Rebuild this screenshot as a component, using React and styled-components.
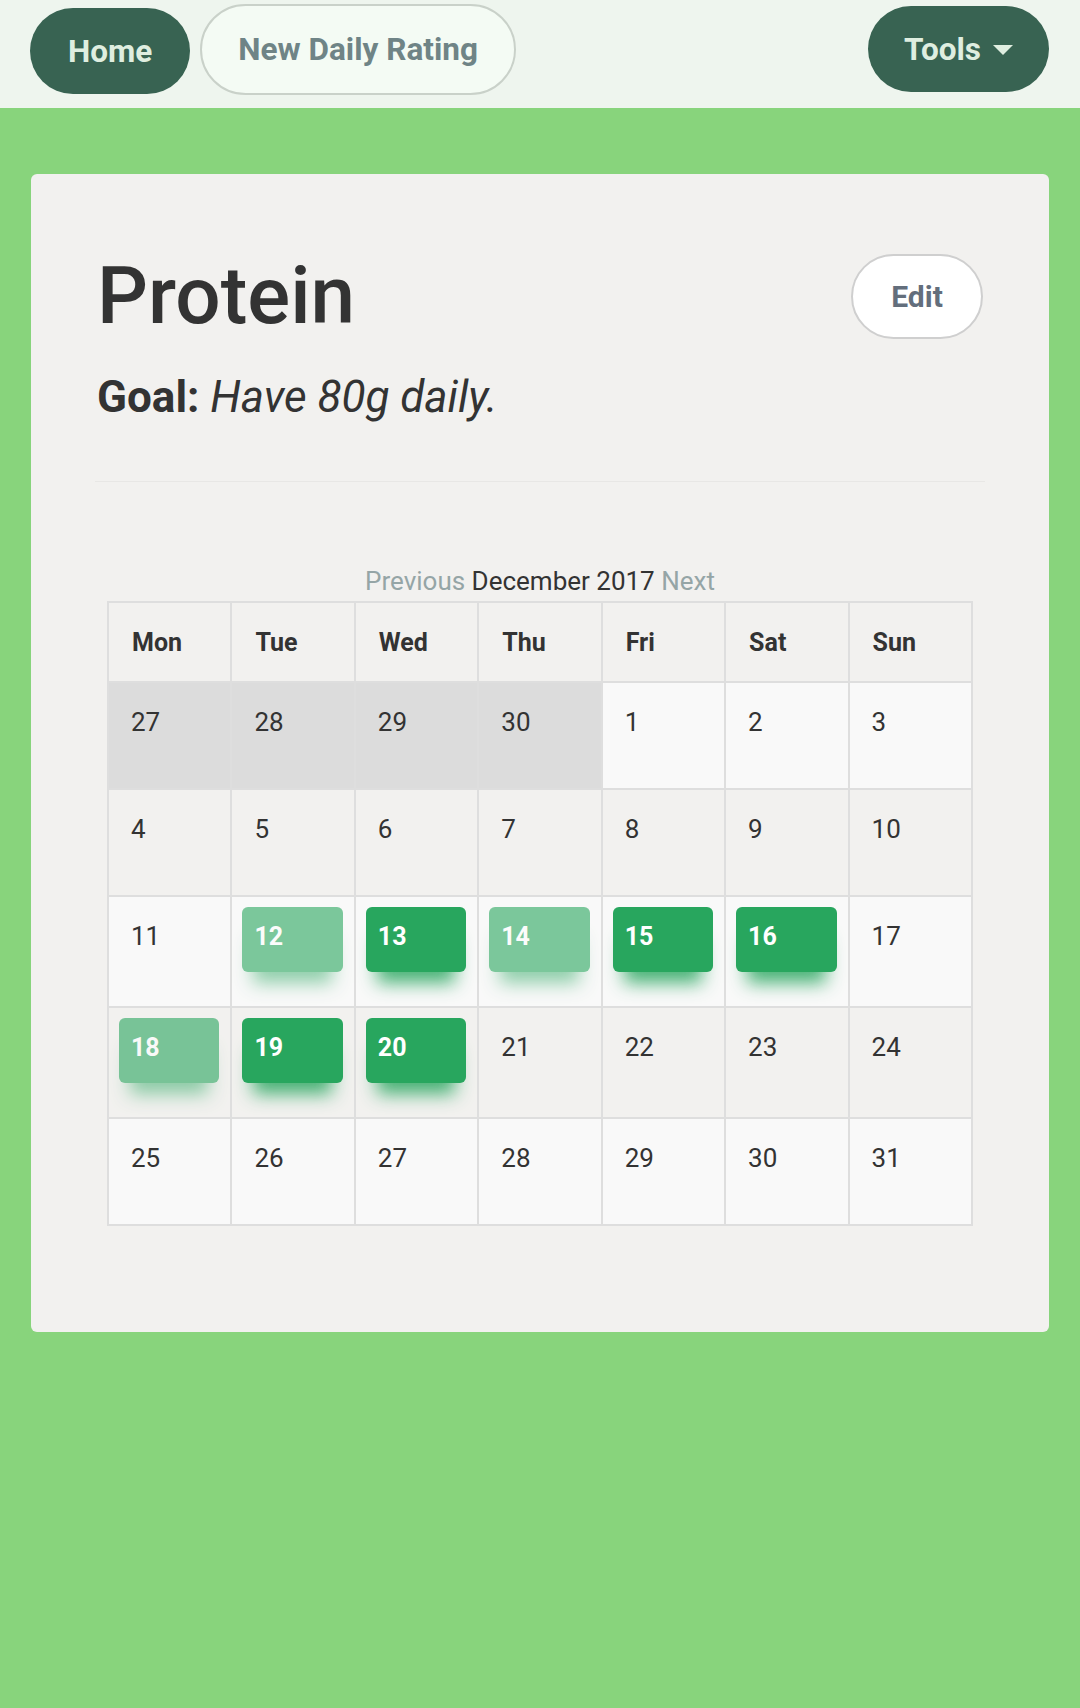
import React from "react";
import styled, { createGlobalStyle } from "styled-components";

const GlobalStyle = createGlobalStyle`
  html, body {
    margin: 0;
    padding: 0;
    background: #88d47c;
  }
  body {
    font-family: Roboto, "Liberation Sans", sans-serif;
    color: #333;
  }
  #root {
    min-height: 1708px;
  }
`;

const Navbar = styled.nav`
  display: flex;
  align-items: center;
  gap: 10px;
  height: 108px;
  box-sizing: border-box;
  padding: 0 31px 10px 30px;
  background: #eef5ee;
`;

const NavButton = styled.button`
  display: flex;
  align-items: center;
  gap: 12px;
  height: ${(p) => (p.$outline ? "91px" : "86px")};
  padding: 0 ${(p) => (p.$outline ? "36px" : p.$push ? "36px" : "38px")};
  border-radius: 46px;
  border: ${(p) => (p.$outline ? "2px solid #c9d1c9" : "none")};
  background: ${(p) => (p.$outline ? "#f4fbf4" : "#386352")};
  color: ${(p) => (p.$outline ? "#6f8486" : "#dfeee0")};
  font-family: Roboto, "Liberation Sans", sans-serif;
  font-size: 31.5px;
  font-weight: 700;
  cursor: pointer;
  margin-left: ${(p) => (p.$push ? "auto" : "0")};
  margin-top: ${(p) => (p.$home ? "4px" : "0")};
`;

const Caret = styled.span`
  width: 0;
  height: 0;
  border-left: 10px solid transparent;
  border-right: 10px solid transparent;
  border-top: 10px solid #dfeee0;
  margin-top: 2px;
`;

const Card = styled.section`
  margin: 66px 31px 0;
  padding: 74px 66px 106px;
  background: #f2f1ef;
  border-radius: 6px;
`;

const Header = styled.div`
  display: flex;
  align-items: center;
  justify-content: space-between;
`;

const Title = styled.h1`
  margin: 0;
  font-size: 80px;
  line-height: 96px;
  font-weight: 500;
  color: #333;
`;

const EditButton = styled.button`
  width: 132px;
  height: 85px;
  border-radius: 43px;
  border: 2px solid #cfcfcf;
  background: #fff;
  color: #636e7c;
  font-family: Roboto, "Liberation Sans", sans-serif;
  font-size: 30px;
  font-weight: 700;
  cursor: pointer;
`;

const Goal = styled.p`
  margin: 27px 0 0;
  font-size: 44px;
  line-height: 52px;
  b {
    font-weight: 700;
  }
  em {
    font-style: italic;
  }
`;

const Rule = styled.hr`
  margin: 58px -2px 0;
  border: 0;
  border-top: 1px solid #e8e7e5;
`;

const Calendar = styled.div`
  margin: 80px 10px 0;
`;

const Caption = styled.div`
  text-align: center;
  font-size: 26px;
  line-height: 39px;
  color: #333;
`;

const NavLink = styled.span`
  color: #95a5a6;
`;

const Table = styled.table`
  width: 100%;
  border-collapse: collapse;
  table-layout: fixed;
  border: 2px solid #dedede;
`;

const HeadCell = styled.th`
  padding: 21px 23px 20px;
  border: 2px solid #dedede;
  text-align: left;
  font-size: 25px;
  line-height: 37px;
  font-weight: 700;
  color: #333;
  background: #f2f1ef;
`;

const Row = styled.tr`
  background: ${(p) => (p.$odd ? "#f9f9f9" : "transparent")};
`;

const DayCell = styled.td`
  padding: 10px 11px ${(p) => (p.$tall ? "34px" : "30px")} 10px;
  border: 2px solid #dedede;
  vertical-align: top;
  background: ${(p) => (p.$other ? "#dcdcdc" : "inherit")};
`;

const Day = styled.div`
  height: 65px;
  box-sizing: border-box;
  padding: 11px 12px;
  border-radius: 6px;
  font-size: ${(p) => (p.$rating ? "25px" : "26px")};
  line-height: 37px;
  font-weight: ${(p) => (p.$rating ? 700 : 400)};
  color: ${(p) => (p.$rating ? "#fff" : "#333")};
  background: ${(p) => (p.$rating ? "#28a65e" : "transparent")};
  opacity: ${(p) => (p.$rating === "low" ? 0.6 : 1)};
  box-shadow: ${(p) =>
    p.$rating ? "0 22px 18px -11px rgba(40, 166, 94, 0.85)" : "none"};
`;

const days = ["Mon", "Tue", "Wed", "Thu", "Fri", "Sat", "Sun"];

const weeks = [
  [
    { n: 27, other: true },
    { n: 28, other: true },
    { n: 29, other: true },
    { n: 30, other: true },
    { n: 1 },
    { n: 2 },
    { n: 3 },
  ],
  [4, 5, 6, 7, 8, 9, 10].map((n) => ({ n })),
  [
    { n: 11 },
    { n: 12, rating: "low" },
    { n: 13, rating: "high" },
    { n: 14, rating: "low" },
    { n: 15, rating: "high" },
    { n: 16, rating: "high" },
    { n: 17 },
  ],
  [
    { n: 18, rating: "low" },
    { n: 19, rating: "high" },
    { n: 20, rating: "high" },
    { n: 21 },
    { n: 22 },
    { n: 23 },
    { n: 24 },
  ],
  [25, 26, 27, 28, 29, 30, 31].map((n) => ({ n })),
];

const App = () => {
  return (
    <>
      <GlobalStyle />
      <Navbar>
        <NavButton $home>Home</NavButton>
        <NavButton $outline>New Daily Rating</NavButton>
        <NavButton $push>
          Tools <Caret />
        </NavButton>
      </Navbar>
      <Card>
        <Header>
          <Title>Protein</Title>
          <EditButton>Edit</EditButton>
        </Header>
        <Goal>
          <b>Goal:</b> <em>Have 80g daily.</em>
        </Goal>
        <Rule />
        <Calendar>
          <Caption>
            <NavLink>Previous</NavLink> December 2017 <NavLink>Next</NavLink>
          </Caption>
          <Table>
            <thead>
              <tr>
                {days.map((d) => (
                  <HeadCell key={d}>{d}</HeadCell>
                ))}
              </tr>
            </thead>
            <tbody>
              {weeks.map((week, w) => {
                const tall = week.some((d) => d.rating);
                return (
                  <Row key={w} $odd={w % 2 === 0}>
                    {week.map((d, k) => (
                      <DayCell key={k} $other={d.other} $tall={tall}>
                        <Day $rating={d.rating}>{d.n}</Day>
                      </DayCell>
                    ))}
                  </Row>
                );
              })}
            </tbody>
          </Table>
        </Calendar>
      </Card>
    </>
  );
};

export default App;
